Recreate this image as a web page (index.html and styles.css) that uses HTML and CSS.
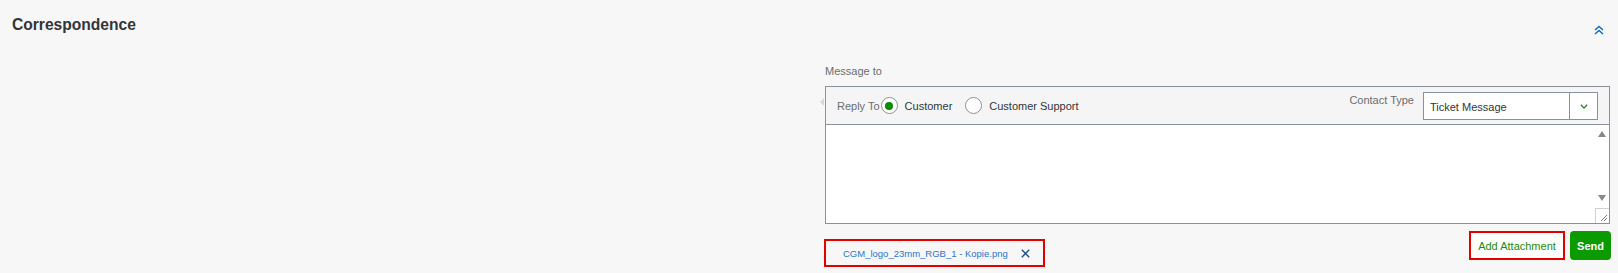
FILE: index.html
```html
<!DOCTYPE html>
<html lang="en">
<head>
<meta charset="utf-8">
<title>Correspondence</title>
<link rel="stylesheet" href="styles.css">
</head>
<body>
<div class="page">
  <header class="section-header">
    <h2 class="title">Correspondence</h2>
    <button class="collapse" aria-label="Collapse">
      <svg width="10" height="10" viewBox="0 0 10 10"><path d="M1 5 L5 1.5 L9 5 M1 9 L5 5.5 L9 9" fill="none" stroke="#0a6ed1" stroke-width="1.5"/></svg>
    </button>
  </header>
  <div class="section-body">
    <div class="left-space"></div>
    <div class="composer">
      <div class="field-label">Message to</div>
      <div class="box">
        <div class="box-head">
          <span class="reply-label">Reply To</span>
          <span class="radio checked"><span class="dot"></span></span>
          <span class="radio-text">Customer</span>
          <span class="radio"></span>
          <span class="radio-text">Customer Support</span>
          <span class="head-fill"></span>
          <span class="contact-label">Contact Type</span>
          <div class="select">
            <span class="select-value">Ticket Message</span>
            <span class="select-arrow">
              <svg width="8" height="5" viewBox="0 0 8 5"><path d="M0.8 0.8 L4 4 L7.2 0.8" fill="none" stroke="#2a8a1e" stroke-width="1.3"/></svg>
            </span>
          </div>
        </div>
        <div class="editor">
          <div class="editor-text"></div>
          <div class="scroll">
            <span class="arrow-up"></span>
            <span class="scroll-fill"></span>
            <span class="arrow-down"></span>
            <span class="grip">
              <svg width="12" height="13" viewBox="0 0 12 13"><path d="M5 12 L11 6 M8 12 L11 9" stroke="#777" stroke-width="1"/></svg>
            </span>
          </div>
        </div>
      </div>
      <div class="actions">
        <div class="attachment">
          <span class="file-name">CGM_logo_23mm_RGB_1 - Kopie.png</span>
          <svg class="remove" width="9" height="9" viewBox="0 0 9 9"><path d="M0.8 0.8 L8.2 8.2 M8.2 0.8 L0.8 8.2" stroke="#1d4f91" stroke-width="1.4"/></svg>
        </div>
        <div class="buttons">
          <button class="btn-attach">Add Attachment</button>
          <button class="btn-send">Send</button>
        </div>
      </div>
    </div>
  </div>
</div>
</body>
</html>
```
FILE: styles.css
```css
* { box-sizing: border-box; }
body {
  margin: 0;
  background: #f7f7f7;
  font-family: "Liberation Sans", Arial, sans-serif;
  color: #32363a;
}
.page { width: 1618px; height: 273px; }
.section-header {
  display: flex;
  justify-content: space-between;
  align-items: flex-start;
  height: 64px;
  padding: 16px 14px 0 12px;
}
.title {
  margin: 0;
  font-size: 15.6px;
  line-height: 18px;
  font-weight: bold;
  color: #32363a;
}
.collapse {
  margin-top: 9px;
  padding: 0;
  border: 0;
  background: none;
  width: 10px;
  height: 10px;
  display: block;
}
.collapse svg { display: block; }
.section-body {
  display: grid;
  grid-template-columns: 1fr 787px;
  padding-right: 7px;
}
.field-label {
  font-size: 11px;
  line-height: 14px;
  color: #6a6d70;
  margin: 0 0 8px 1px;
}
.box {
  position: relative;
  margin: 0 1px;
  border: 1px solid #89919a;
}
.box::before {
  content: "";
  position: absolute;
  left: -6px;
  top: 11px;
  border-right: 4px solid #d5d7d9;
  border-top: 4px solid transparent;
  border-bottom: 4px solid transparent;
}
.box-head {
  display: flex;
  align-items: center;
  height: 38px;
  padding: 0 11px 0 11px;
  background: #f5f5f5;
  border-bottom: 1px solid #89919a;
  font-size: 11px;
}
.reply-label { color: #6a6d70; }
.radio {
  width: 17px;
  height: 17px;
  border-radius: 50%;
  border: 1px solid #89919a;
  background: #fff;
  display: flex;
  align-items: center;
  justify-content: center;
  margin-left: 1px;
}
.radio + .radio-text { margin-left: 7px; }
.radio-text + .radio { margin-left: 13px; }
.dot {
  width: 8px;
  height: 8px;
  border-radius: 50%;
  background: #0a8c00;
}
.radio-text { color: #32363a; }
.head-fill { flex: 1; }
.contact-label {
  color: #6a6d70;
  align-self: flex-start;
  margin-top: 6px;
  line-height: 14px;
  margin-right: 9px;
}
.select {
  display: flex;
  width: 175px;
  height: 28px;
  border: 1px solid #89919a;
  background: #fff;
}
.select-value {
  flex: 1;
  padding-left: 6px;
  display: flex;
  align-items: center;
  padding-top: 2px;
  color: #32363a;
}
.select-arrow {
  width: 28px;
  border-left: 1px solid #89919a;
  display: flex;
  align-items: center;
  justify-content: center;
  padding-top: 2px;
}
.select-arrow svg { display: block; }
.editor {
  display: flex;
  height: 98px;
  background: #fff;
}
.editor-text { flex: 1; }
.scroll {
  width: 14px;
  display: flex;
  flex-direction: column;
  align-items: center;
}
.arrow-up {
  margin-top: 6px;
  border-bottom: 6px solid #888;
  border-left: 4px solid transparent;
  border-right: 4px solid transparent;
}
.scroll-fill { flex: 1; }
.arrow-down {
  margin-bottom: 7px;
  border-top: 6px solid #888;
  border-left: 4px solid transparent;
  border-right: 4px solid transparent;
}
.grip {
  width: 14px;
  height: 15px;
  border-top: 1px solid #d0d0d0;
  border-left: 1px solid #d0d0d0;
  display: block;
}
.grip svg { display: block; }
.actions {
  display: flex;
  justify-content: space-between;
  align-items: flex-start;
  margin-top: 7px;
}
.attachment {
  display: flex;
  align-items: center;
  width: 221px;
  height: 28px;
  margin-top: 8px;
  border: 2px solid #e50000;
  padding: 0 0 0 17px;
  font-size: 9.5px;
}
.file-name { color: #2a75d0; }
.remove { margin-left: 13px; display: block; }
.buttons {
  display: flex;
  gap: 5px;
}
.btn-attach {
  height: 29px;
  width: 96px;
  border: 2px solid #e50000;
  background: #fff;
  color: #1d8b00;
  font-family: "Liberation Sans", Arial, sans-serif;
  font-size: 11px;
  padding: 0;
}
.btn-send {
  height: 29px;
  width: 41px;
  border: 0;
  border-radius: 4px;
  background: #0b9a00;
  color: #fff;
  font-family: "Liberation Sans", Arial, sans-serif;
  font-size: 11px;
  font-weight: bold;
  padding: 0;
}
```
